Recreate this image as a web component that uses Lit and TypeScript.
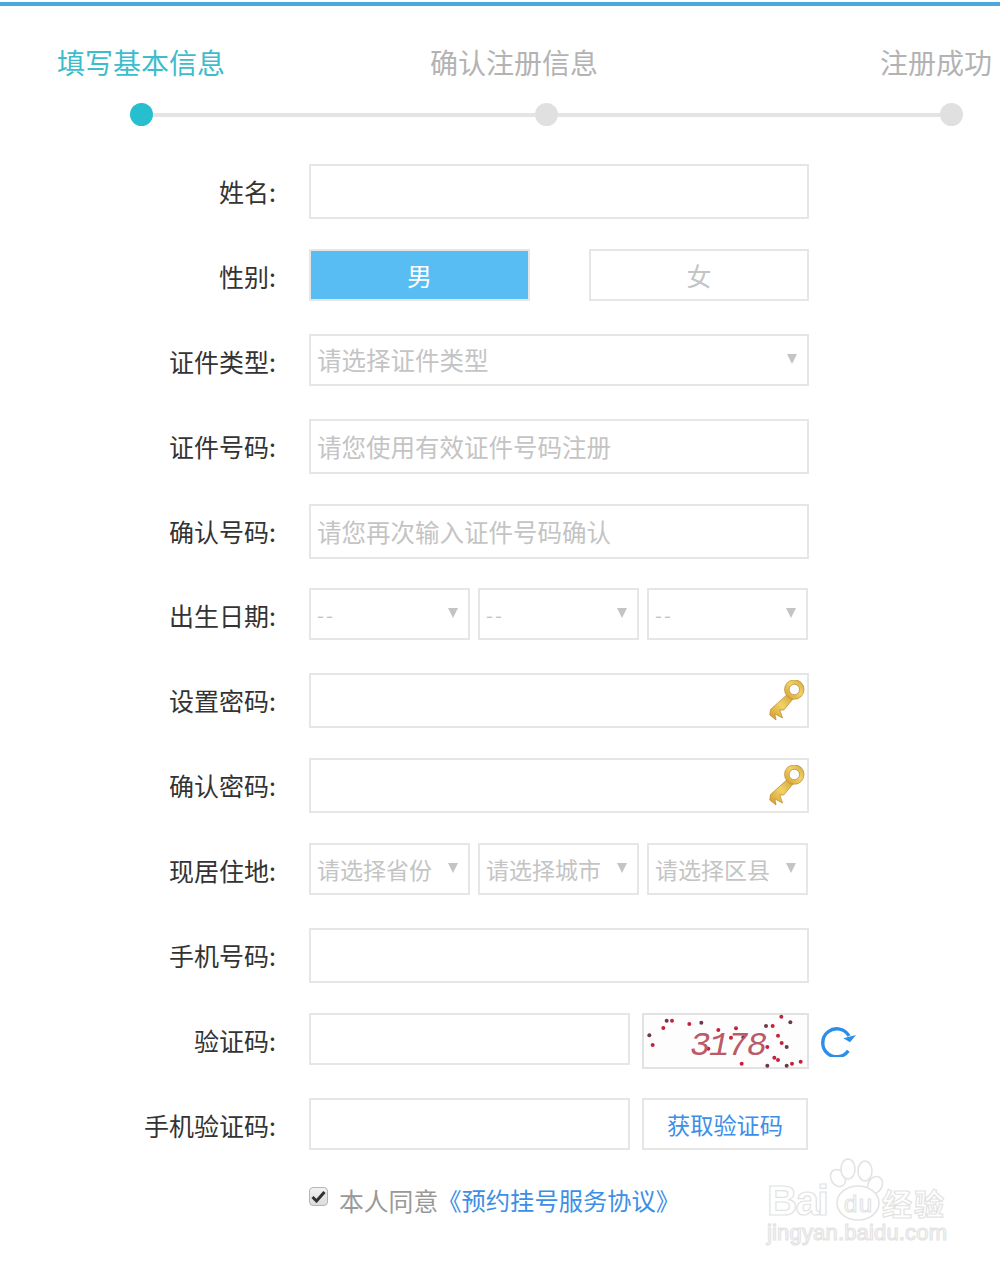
import { LitElement, html, css, svg } from "lit";
import { customElement } from "lit/decorators.js";

const dots: [number, number][] = [[58,106],[68,135],[100,84],[110,62],[126,62],[178,72],[214,68],[265,90],[318,85],[340,112],[303,113],[235,146],[408,78],[428,78],[454,50],[481,67],[444,107],[455,129],[470,141],[412,141],[335,191],[412,197],[433,173],[444,180],[470,197],[486,191],[512,185]];

const key = html`<svg class="key" width="36" height="44" viewBox="0 0 36 44">
  <defs><linearGradient id="kg" x1="0" y1="1" x2="1" y2="0"><stop offset="0" stop-color="#d39a2a"/><stop offset=".55" stop-color="#f2d264"/><stop offset="1" stop-color="#cfa23f"/></linearGradient></defs>
  <path d="M17.7 15 L1.5 29.5 L0.8 35 L7 40 L5.8 33.8 L13.5 38 L10.8 30 L14.7 30 L24 19 Z" fill="url(#kg)" stroke="#b3852c" stroke-width=".7"/>
  <circle cx="25.3" cy="9.5" r="9.8" fill="url(#kg)" stroke="#b3852c" stroke-width=".6"/>
  <circle cx="25.3" cy="9.5" r="5.2" fill="#fff" stroke="#a8853f" stroke-width=".7"/>
</svg>`;

@customElement("app-root")
export class AppRoot extends LitElement {
  static styles = css`
    :host { display: block; position: relative; width: 1000px; height: 1267px; background: #fff; overflow: hidden;
      font-family: "Noto Sans CJK SC", "Noto Sans", sans-serif; color: #333; }
    .top { height: 4px; margin-top: 2px; background: #4aa8dc; }
    .step-labels { display: grid; grid-template-columns: 373px 450px auto; padding: 34px 0 0 57px; height: 44px;
      font-size: 28px; line-height: 44px; color: #b3b3b3; white-space: nowrap; }
    .step-labels .on { color: #3dbccb; }
    .track { display: flex; align-items: center; margin: 19px 0 0 130px; width: 833px; height: 23px; }
    .dot { width: 23px; height: 23px; border-radius: 50%; background: #e0e0e0; flex: none; }
    .dot.on { background: #27bfce; }
    .line { height: 4px; background: #e4e4e4; flex: 1; }
    .form { display: grid; grid-template-columns: 276px 500px; column-gap: 33px; grid-auto-rows: 84.9px; margin-top: 38px; }
    .label { font-size: 25px; line-height: 55px; text-align: right; color: #333; white-space: nowrap; }
    .box { box-sizing: border-box; border: 2px solid #e6e6e6; background: #fff; font-size: 24.5px; color: #c4c4c4;
      padding-left: 6px; display: flex; align-items: center; position: relative; white-space: nowrap; flex: none; }
    .h55 { height: 55px; }
    .h52 { height: 52px; }
    .pair { display: flex; justify-content: space-between; align-items: flex-start; }
    .gender { box-sizing: border-box; width: 220px; height: 52px; border: 2px solid #e6e6e6; font-size: 25px;
      display: flex; align-items: center; justify-content: center; color: #c4c4c4; }
    .gender.on { width: 221px; background: #57bdf2; color: #fff; }
    .caret { position: absolute; right: 10px; top: 18px; width: 0; height: 0; border: 5.5px solid transparent;
      border-top: 10px solid #c4c4c4; border-bottom: 0; }
    .trio { display: flex; gap: 8px; align-items: flex-start; }
    .trio .box { width: 161px; font-size: 23px; }
    .trio .box .dash { color: #c4c4c4; letter-spacing: 2px; font-size: 20px; }
    .key { position: absolute; right: 2px; top: 5px; }
    .code { display: flex; align-items: flex-start; }
    .code .box { width: 321px; }
    .captcha { display: block; margin-left: 12px; flex: none; }
    .refresh { margin: 10px 0 0 12px; flex: none; }
    .sms { box-sizing: border-box; width: 166px; height: 52px; margin-left: 12px; border: 2px solid #e6e6e6;
      display: flex; align-items: center; justify-content: center; font-size: 23.2px; color: #3d8fe6; white-space: nowrap; }
    .agree { grid-column: 2; display: flex; align-items: center; height: 46px; margin-top: -6px; font-size: 24.8px; color: #999; white-space: nowrap; }
    .check { box-sizing: border-box; width: 19px; height: 19px; border: 1.5px solid #b5b5b5; border-radius: 4px;
      background: linear-gradient(#f2f2f2, #dcdcdc); margin: -6px 11px 0 0; display: flex; align-items: center; justify-content: center; }
    .link { color: #3d8fe6; font-size: 24.3px; margin-left: -1px; }
    .mark { position: absolute; left: 760px; top: 1150px; }
    .mark text { fill: #fff; stroke: #e3e3e3; stroke-width: 1.2; font-family: "Liberation Sans", sans-serif; }
    .mark .cn { font-family: "Noto Sans CJK SC", sans-serif; font-weight: 700; }
    .mark .outline { fill: #fff; stroke: #e3e3e3; stroke-width: 1.6; }
    .digits { font-family: "Liberation Mono", monospace; font-style: italic; font-size: 34px; fill: #bb5a69; letter-spacing: -1.5px; }
  `;

  private row(label: string, body: unknown) {
    return html`<div class="label">${label}:</div><div>${body}</div>`;
  }

  private select(text: string, cls = "") {
    return html`<div class="box h52"><span class=${cls}>${text}</span><span class="caret"></span></div>`;
  }

  private captcha() {
    return html`<svg class="captcha" width="167" height="56" viewBox="0 0 167 56">
      <rect x="1" y="1" width="165" height="54" fill="#fdfdfd" stroke="#e2e2e2" stroke-width="2"/>
      ${dots.map(([x, y], i) => svg`<circle cx=${x / 3 - 12} cy=${y / 3 - 13} r="2" fill=${i % 3 === 0 ? "#6b3a4a" : "#c8203c"}/>`)}
      <text class="digits" x="48" y="42">3178</text>
    </svg>`;
  }

  render() {
    return html`
      <div class="top"></div>
      <div class="step-labels"><span class="on">填写基本信息</span><span>确认注册信息</span><span>注册成功</span></div>
      <div class="track"><span class="dot on"></span><span class="line"></span><span class="dot"></span><span class="line"></span><span class="dot"></span></div>
      <div class="form">
        ${this.row("姓名", html`<div class="box h55"></div>`)}
        ${this.row("性别", html`<div class="pair"><div class="gender on">男</div><div class="gender">女</div></div>`)}
        ${this.row("证件类型", this.select("请选择证件类型"))}
        ${this.row("证件号码", html`<div class="box h55">请您使用有效证件号码注册</div>`)}
        ${this.row("确认号码", html`<div class="box h55">请您再次输入证件号码确认</div>`)}
        ${this.row("出生日期", html`<div class="trio">${this.select("--", "dash")}${this.select("--", "dash")}${this.select("--", "dash")}</div>`)}
        ${this.row("设置密码", html`<div class="box h55">${key}</div>`)}
        ${this.row("确认密码", html`<div class="box h55">${key}</div>`)}
        ${this.row("现居住地", html`<div class="trio">${this.select("请选择省份")}${this.select("请选择城市")}${this.select("请选择区县")}</div>`)}
        ${this.row("手机号码", html`<div class="box h55"></div>`)}
        ${this.row("验证码", html`<div class="code"><div class="box h52"></div>${this.captcha()}
          <svg class="refresh" width="36" height="34" viewBox="0 0 36 34" fill="none">
            <path d="M27.3 27.7 A14 14 0 1 1 28 13" stroke="#2b8fe9" stroke-width="3.4"/>
            <path d="M22.3 15.3 L35 12 L29 19.3 Z" fill="#2b8fe9"/>
          </svg></div>`)}
        ${this.row("手机验证码", html`<div class="code"><div class="box h52"></div><div class="sms">获取验证码</div></div>`)}
        <div class="agree">
          <span class="check"><svg width="15" height="13" viewBox="0 0 15 13"><path d="M1.5 7 L5.5 11 L13.5 2" fill="none" stroke="#333" stroke-width="3"/></svg></span>
          本人同意<span class="link">《预约挂号服务协议》</span>
        </div>
      </div>
      <svg class="mark" width="200" height="100" viewBox="0 0 200 100">
        <text x="7" y="65" font-size="42" font-weight="700" textLength="62">Bai</text>
        <ellipse class="outline" cx="78" cy="28" rx="7" ry="9" transform="rotate(-30 78 28)"/>
        <ellipse class="outline" cx="88" cy="19" rx="7" ry="10"/>
        <ellipse class="outline" cx="105" cy="21" rx="7" ry="10"/>
        <ellipse class="outline" cx="115" cy="35" rx="7" ry="9" transform="rotate(30 115 35)"/>
        <ellipse class="outline" cx="98" cy="53" rx="21" ry="17"/>
        <text x="84" y="62" font-size="24" textLength="28">du</text>
        <text class="cn" x="122" y="65" font-size="30" textLength="62">经验</text>
        <text x="7" y="90" font-size="22" textLength="180" stroke-width="0.9">jingyan.baidu.com</text>
      </svg>
    `;
  }
}
